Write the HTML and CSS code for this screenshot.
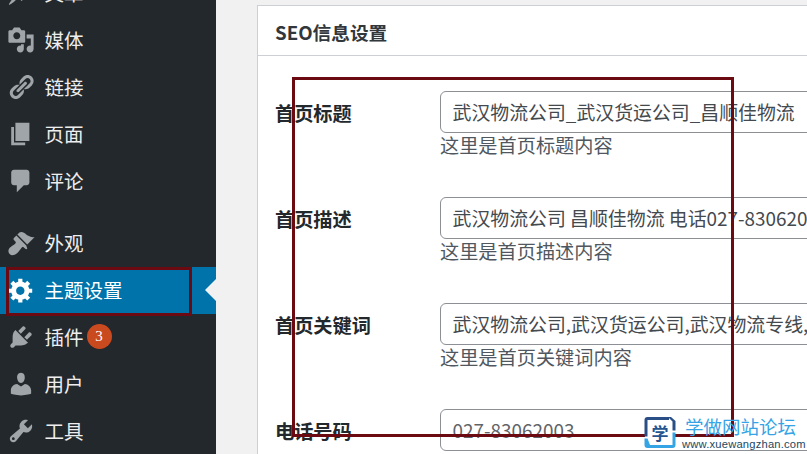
FILE: index.html
```html
<!DOCTYPE html>
<html lang="zh">
<head>
<meta charset="utf-8">
<title>主题设置</title>
<link rel="stylesheet" href="styles.css">
</head>
<body>
<div class="app">
  <nav class="side">
    <ul class="menu">
      <li class="item"><svg class="ico" viewBox="0 0 20 20"><path d="M10.44 3.02l1.82-1.82 6.36 6.35-1.83 1.82c-1.05-.68-2.48-.57-3.41.36l-.75.75c-.92.93-1.04 2.35-.35 3.41l-1.83 1.82-2.41-2.41-2.8 2.79c-.42.42-3.38 2.71-3.8 2.29s1.86-3.39 2.28-3.81l2.79-2.79L4.1 9.36l1.83-1.82c1.05.69 2.48.57 3.4-.36l.75-.75c.93-.92 1.05-2.35.36-3.41z"/></svg><span>文章</span></li>
      <li class="item"><svg class="ico" viewBox="0 0 20 20"><path d="M13 11V4c0-.55-.45-1-1-1h-1.67L9 1H5L3.67 3H2c-.55 0-1 .45-1 1v7c0 .55.45 1 1 1h10c.55 0 1-.45 1-1zM7 4.5c1.38 0 2.5 1.12 2.5 2.5S8.38 9.5 7 9.5 4.5 8.38 4.5 7 5.62 4.5 7 4.5zM14 6h5v10.5c0 1.38-1.12 2.5-2.5 2.5S14 17.88 14 16.5s1.12-2.5 2.5-2.5c.17 0 .34.02.5.05V9h-3V6zm-4 8.05V13h2v3.5c0 1.38-1.12 2.5-2.5 2.5S7 17.88 7 16.5 8.12 14 9.5 14c.17 0 .34.02.5.05z"/></svg><span>媒体</span></li>
      <li class="item"><svg class="ico" viewBox="0 0 20 20"><path d="M17.74 2.76c1.68 1.69 1.68 4.41 0 6.1l-1.53 1.52c-1.12 1.12-2.7 1.47-4.14 1.09l2.62-2.61.76-.77.76-.76c.84-.84.84-2.2 0-3.04-.84-.85-2.2-.85-3.04 0l-.77.76-3.38 3.38c-.37-1.44-.02-3.02 1.1-4.14l1.52-1.53c1.69-1.68 4.42-1.68 6.1 0zM8.59 13.43l5.34-5.34c.42-.42.42-1.1 0-1.52-.44-.43-1.13-.39-1.53 0l-5.33 5.34c-.42.42-.42 1.1 0 1.52.44.43 1.13.39 1.52 0zm-.76 2.29l4.14-4.15c.38 1.44.03 3.02-1.09 4.14l-1.52 1.53c-1.69 1.68-4.41 1.68-6.1 0-1.68-1.68-1.68-4.42 0-6.1l1.53-1.52c1.12-1.12 2.7-1.47 4.14-1.1l-4.14 4.15c-.85.84-.85 2.2 0 3.05.84.84 2.2.84 3.04 0z"/></svg><span>链接</span></li>
      <li class="item"><svg class="ico" viewBox="0 0 20 20"><path d="M6 15V2h10v13H6zm-1 1h8v2H3V5h2v11z"/></svg><span>页面</span></li>
      <li class="item"><svg class="ico" viewBox="0 0 20 20"><path d="M5 2h9c1.1 0 2 .9 2 2v7c0 1.1-.9 2-2 2h-2l-5 5v-5H5c-1.1 0-2-.9-2-2V4c0-1.1.9-2 2-2z"/></svg><span>评论</span></li>
      <li class="item gap"><svg class="ico" viewBox="0 0 20 20"><path d="M14.480 11.060L7.410 3.990l1.500-1.500c.5-.56 2.300-.47 3.510.32 1.210.8 1.430 1.280 2.910 2.100 1.180.64 2.450 1.260 4.450.85zm-.71.71L6.700 4.700 4.930 6.470c-.39.39-.39 1.020 0 1.410l1.060 1.060c.39.39.39 1.030 0 1.420-.6.6-1.430 1.110-2.210 1.690-.35.26-.7.53-1.010.84C1.430 13.230.1 16.080 1.870 17.850s4.620.44 6.190-1.500c.31-.31.58-.66.84-1.010.58-.78 1.090-1.610 1.690-2.210.39-.39 1.030-.39 1.420 0l1.060 1.060c.39.39 1.020.39 1.410 0z"/></svg><span>外观</span></li>
      <li class="item current"><svg class="ico" viewBox="0 0 20 20"><path d="M18 12h-2.18c-.17.7-.44 1.35-.81 1.93l1.54 1.54-2.1 2.1-1.54-1.54c-.58.36-1.23.63-1.91.79V19H8v-2.18c-.68-.16-1.33-.43-1.91-.79l-1.54 1.54-2.12-2.12 1.54-1.54c-.36-.58-.63-1.23-.79-1.91H1V9.03h2.17c.16-.7.44-1.35.8-1.94L2.43 5.55l2.1-2.1 1.54 1.54c.58-.37 1.24-.64 1.93-.81V2h3v2.18c.68.16 1.33.43 1.91.79l1.54-1.54 2.12 2.12-1.54 1.54c.36.59.64 1.24.8 1.94H18V12zm-8.5 1.5c1.66 0 3-1.34 3-3s-1.34-3-3-3-3 1.34-3 3 1.34 3 3 3z"/></svg><span>主题设置</span></li>
      <li class="item"><svg class="ico" viewBox="0 0 20 20"><path d="M13.11 4.36L9.87 7.6 8 5.73l3.24-3.24c.35-.34 1.05-.2 1.56.32.52.51.66 1.21.31 1.55zm-8 1.77l.91-1.12 9.01 9.01-1.19.84c-.71.71-2.63 1.16-3.82 1.16H6.14L4.9 17.26c-.59.59-1.54.59-2.12 0-.59-.58-.59-1.53 0-2.12l1.24-1.24v-3.88c0-1.13.4-3.19 1.09-3.89zm7.26 3.97l3.24-3.24c.34-.35 1.04-.21 1.55.31.52.51.66 1.21.31 1.55l-3.24 3.25z"/></svg><span>插件</span><b class="badge">3</b></li>
      <li class="item"><svg class="ico" viewBox="0 0 20 20"><path d="M10 9.25c-2.27 0-2.73-3.44-2.73-3.44C7 4.02 7.82 2 9.97 2c2.16 0 2.98 2.02 2.71 3.81 0 0-.41 3.44-2.68 3.44zm0 2.57L12.72 10c2.39 0 4.52 2.33 4.52 4.53v2.49s-3.65 1.13-7.24 1.13c-3.65 0-7.24-1.13-7.24-1.13v-2.49c0-2.25 1.94-4.48 4.47-4.48z"/></svg><span>用户</span></li>
      <li class="item"><svg class="ico" viewBox="0 0 20 20"><path d="M16.68 9.77c-1.34 1.34-3.3 1.67-4.95.99l-5.41 6.52c-.99.99-2.59.99-3.58 0s-.99-2.59 0-3.57l6.52-5.42c-.68-1.65-.35-3.61.99-4.95 1.28-1.28 3.12-1.62 4.72-1.06l-2.89 2.89 2.82 2.82 2.86-2.87c.53 1.58.18 3.39-1.08 4.65zM3.81 16.21c.4.39 1.04.39 1.43 0 .4-.4.4-1.04 0-1.43-.39-.4-1.03-.4-1.43 0-.39.39-.39 1.03 0 1.43z"/></svg><span>工具</span></li>
    </ul>
  </nav>
  <main class="main">
    <section class="card">
      <h2 class="card-title">SEO信息设置</h2>
      <div class="rows">
        <div class="row">
          <div class="label">首页标题</div>
          <div class="field"><div class="input">武汉物流公司_武汉货运公司_昌顺佳物流</div><p class="desc">这里是首页标题内容</p></div>
        </div>
        <div class="row">
          <div class="label">首页描述</div>
          <div class="field"><div class="input">武汉物流公司 昌顺佳物流 电话027-83062003</div><p class="desc">这里是首页描述内容</p></div>
        </div>
        <div class="row">
          <div class="label">首页关键词</div>
          <div class="field"><div class="input">武汉物流公司,武汉货运公司,武汉物流专线,武汉物流</div><p class="desc">这里是首页关键词内容</p></div>
        </div>
        <div class="row">
          <div class="label">电话号码</div>
          <div class="field"><div class="input input-dim">027-83062003</div></div>
        </div>
      </div>
    </section>
  </main>
</div>
<div class="mark mark-main"></div>
<div class="mark mark-menu"></div>
<div class="brand">
  <svg class="brand-logo" viewBox="0 0 34 34"><rect x="2" y="2" width="30" height="30" rx="3" fill="#fff"/><path d="M26 1.500H4.500a3 3 0 0 0-3 3V21h3V4.500H26z" fill="#2a4f86"/><path d="M28 1.500l-3 0 4.500 4.500V15h3V5.500z" fill="#2a4f86"/><path d="M1.500 23v6.500a3 3 0 0 0 3 3h25a3 3 0 0 0 3-3V17h-3v12.500H7L4.500 23z" fill="#35a4e4"/><text x="17" y="24" class="brand-glyph">学</text></svg>
  <div class="brand-text"><div class="brand-cn">学做网站论坛</div><div class="brand-url">www.xuewangzhan.com</div></div>
</div>
</body>
</html>
```
FILE: styles.css
```css
* { box-sizing: border-box; }
html, body { margin: 0; height: 100%; overflow: hidden; }
body { font-family: "Noto Sans CJK SC", "Liberation Sans", sans-serif; background: #f1f1f1; color: #23282d; }
.app { display: flex; height: 454px; width: 807px; overflow: hidden; }
.side { width: 216px; flex: none; background: #23282d; }
.menu { list-style: none; margin: -30px 0 0; padding: 0; }
.item { height: 47px; display: flex; align-items: center; padding: 0 0 2px 7px; color: #eeeeee; font-size: 19.5px; position: relative; }
.item.gap { margin-top: 15px; }
.ico { width: 28px; height: 28px; fill: #a0a5aa; flex: none; margin-right: 9.5px; }
.current { background: #0073aa; color: #fff; }
.current .ico { fill: #fff; }
.current::after { content: ""; position: absolute; right: 0; top: 12px; border: 11.5px solid transparent; border-right-color: #f1f1f1; border-left-width: 0; }
.badge { width: 25px; height: 25px; border-radius: 50%; background: #ca4a1f; color: #fff; font: 400 15px/25px "Liberation Serif", serif; text-align: center; margin-left: 3px; }
.main { flex: 1; min-width: 0; padding: 5px 0 0 41px; }
.card { width: 720px; background: #fff; border: 1px solid #ccd0d4; }
.card-title { margin: 0; height: 50px; padding-left: 17px; font-size: 18.7px; font-weight: 700; line-height: 52px; border-bottom: 1px solid #ccd0d4; color: #32373c; }
.rows { padding: 35px 0 0 17px; display: flex; flex-direction: column; gap: 22px; }
.row { display: flex; height: 84px; }
.label { width: 165px; flex: none; font-size: 19.2px; font-weight: 700; line-height: 45px; color: #23282d; }
.input { width: 520px; height: 42px; border: 1px solid #8c8f94; border-radius: 6px; padding-left: 11.5px; font-size: 18.9px; line-height: 40px; color: #44494e; white-space: nowrap; overflow: hidden; }
.input-dim { color: #5f6469; }
.desc { margin: 0; font-size: 19.2px; line-height: 25px; color: #50575e; }
.mark { position: absolute; border: 3px solid #6b0a10; pointer-events: none; }
.mark-main { left: 292px; top: 77px; width: 442px; height: 360px; }
.mark-menu { left: 6px; top: 267px; width: 186px; height: 49px; }
.brand { position: absolute; left: 643px; top: 415px; display: flex; gap: 7px; }
.brand-logo { width: 34px; height: 35px; }
.brand-glyph { font-size: 17px; font-weight: 700; fill: #24558f; text-anchor: middle; }
.brand-cn { font-size: 18.5px; line-height: 22px; color: #36a3e6; margin-left: 1px; white-space: nowrap; }
.brand-url { font: 11.2px/14px "Liberation Sans", sans-serif; color: #23475f; letter-spacing: 0.2px; margin-left: -2px; white-space: nowrap; }
```
